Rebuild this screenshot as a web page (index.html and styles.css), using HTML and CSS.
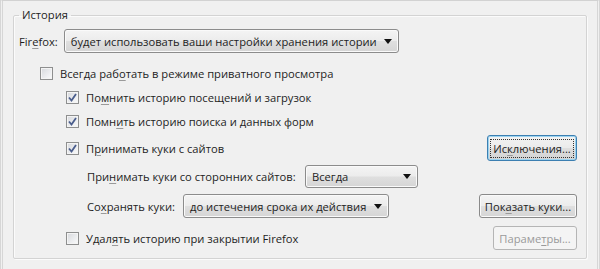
FILE: index.html
```html
<!DOCTYPE html>
<html lang="ru">
<head>
<meta charset="utf-8">
<title>История</title>
<link rel="stylesheet" href="styles.css">
</head>
<body>
<div class="window">
  <fieldset class="group">
    <legend class="legend">История</legend>

    <div class="row row-firefox">
      <span class="label">Fir<u>e</u>fox:</span>
      <div class="select select-mode">
        <span class="select-text">будет использовать ваши настройки хранения истории</span>
        <span class="arrow"></span>
      </div>
    </div>

    <div class="row row-private">
      <span class="check"></span>
      <span class="text">Всегда раб<u>о</u>тать в режиме приватного просмотра</span>
    </div>

    <div class="row row-visits indent">
      <span class="check checked"><svg viewBox="0 0 13 13" width="13" height="13"><path d="M3 6.5 L5.5 9.5 L10 3" fill="none" stroke="#4a5d8c" stroke-width="1.8"/></svg></span>
      <span class="text">По<u>м</u>нить историю посещений и загрузок</span>
    </div>

    <div class="row row-forms indent">
      <span class="check checked"><svg viewBox="0 0 13 13" width="13" height="13"><path d="M3 6.5 L5.5 9.5 L10 3" fill="none" stroke="#4a5d8c" stroke-width="1.8"/></svg></span>
      <span class="text">Помн<u>и</u>ть историю поиска и данных форм</span>
    </div>

    <div class="row row-cookies indent">
      <span class="check checked"><svg viewBox="0 0 13 13" width="13" height="13"><path d="M3 6.5 L5.5 9.5 L10 3" fill="none" stroke="#4a5d8c" stroke-width="1.8"/></svg></span>
      <span class="text">П<u>р</u>инимать куки с сайтов</span>
      <button class="btn btn-focus btn-exceptions"><span class="focus-ring">Ис<u>к</u>лючения...</span></button>
    </div>

    <div class="row row-third sub">
      <span class="label label-third">При<u>н</u>имать куки со сторонних сайтов:</span>
      <div class="select select-third">
        <span class="select-text">Всегда</span>
        <span class="arrow"></span>
      </div>
    </div>

    <div class="row row-keep sub">
      <span class="label label-keep">Со<u>х</u>ранять куки:</span>
      <div class="select select-keep">
        <span class="select-text">до истечения срока их действия</span>
        <span class="arrow"></span>
      </div>
      <button class="btn btn-show">Пок<u>а</u>зать куки...</button>
    </div>

    <div class="row row-clear indent">
      <span class="check"></span>
      <span class="text">Удал<u>я</u>ть историю при закрытии Firefox</span>
      <button class="btn btn-disabled btn-params" disabled>Параме<u>т</u>ры...</button>
    </div>
  </fieldset>
</div>
</body>
</html>
```

FILE: styles.css
```css
* { box-sizing: border-box; }

html, body {
  margin: 0;
  padding: 0;
  background: #f0f0f0;
}

body {
  font-family: "Open Sans", "Noto Sans", sans-serif;
  font-size: 11.2px;
  color: #1e1e1e;
  width: 600px;
  height: 269px;
  overflow: hidden;
}

u {
  text-decoration: underline;
  text-decoration-color: #9a9a9a;
  text-underline-offset: 2px;
}

.window {
  width: 600px;
  height: 269px;
  padding: 6px 10px 0 10px;
  border-top: 1px solid #d2d2d2;
  border-right: 3px double #d6d6d6;
  border-left: 3px double #d6d6d6;
}

.group {
  margin: 0;
  padding: 0 9px 0 0;
  height: 252px;
  border: 1px solid #d3d3d3;
  border-radius: 2px;
  box-shadow: inset 1px 1px 0 #fbfbfb, 1px 1px 0 #fbfbfb;
}

.legend {
  margin-left: 5px;
  padding: 0 3px;
  line-height: 16px;
  height: 16px;
}

.row {
  display: flex;
  align-items: center;
  height: 24px;
  white-space: nowrap;
}

.row-firefox { margin-top: 6px; padding-left: 5px; }
.row-private { margin-top: 8px; padding-left: 26px; }
.row-visits { margin-top: 0; }
.row-forms { margin-top: 0; }
.row-cookies { margin-top: 2px; height: 26px; }
.row-third { margin-top: 3px; }
.row-keep { margin-top: 6px; }
.row-clear { margin-top: 8px; }

.indent { padding-left: 52px; }
.sub { padding-left: 73px; }

.label { margin-right: 6px; }
.label-third { width: 218px; margin-right: 0; }
.label-keep { width: 96px; margin-right: 0; }

.text { margin-left: 7px; }

.check {
  width: 13px;
  height: 13px;
  flex: none;
  border: 1px solid #8e8f8f;
  background: linear-gradient(135deg, #d6d8dc 0%, #f0f1f3 70%, #fafafa 100%);
  box-shadow: inset 0 0 0 1px #f4f4f4;
  display: flex;
  align-items: center;
  justify-content: center;
}

.check svg {
  display: block;
  margin: -1px;
}

.select {
  position: relative;
  display: flex;
  align-items: center;
  height: 24px;
  padding: 0 22px 0 6px;
  border: 1px solid #8c8c8c;
  border-radius: 3px;
  background: linear-gradient(#f4f4f4 0%, #ececec 48%, #dfdfdf 52%, #d5d5d5 100%);
  box-shadow: inset 0 0 0 1px #fafafa;
}

.select-mode { width: 335px; }
.select-third { width: 113px; height: 23px; }
.select-keep { width: 206px; }

.arrow {
  position: absolute;
  right: 6px;
  top: 50%;
  margin-top: -2px;
  width: 0;
  height: 0;
  border-left: 4px solid transparent;
  border-right: 4px solid transparent;
  border-top: 5px solid #111;
}

.btn {
  margin-left: auto;
  height: 24px;
  padding: 0 6px;
  font: inherit;
  color: #1e1e1e;
  border: 1px solid #8a8a8a;
  border-radius: 3px;
  background: linear-gradient(#f4f4f4 0%, #ececec 48%, #dfdfdf 52%, #d5d5d5 100%);
  box-shadow: inset 0 0 0 1px #fafafa;
  display: flex;
  align-items: center;
  justify-content: center;
}

.btn-exceptions { width: 90px; height: 26px; }
.btn-show { width: 98px; }
.btn-params { width: 84px; }

.btn-focus {
  border-color: #3c7fb1;
  box-shadow: inset 0 0 0 1px #9bd3f0;
  background: linear-gradient(#f3f3f3 0%, #ebebeb 48%, #dedede 52%, #d2d2d2 100%);
}

.focus-ring {
  padding: 1px 2px;
  outline: 1px dotted #333;
  outline-offset: 0;
}

.btn-disabled {
  color: #9a9a9a;
  border-color: #b5b5b5;
  background: #f4f4f4;
  box-shadow: none;
}
```
